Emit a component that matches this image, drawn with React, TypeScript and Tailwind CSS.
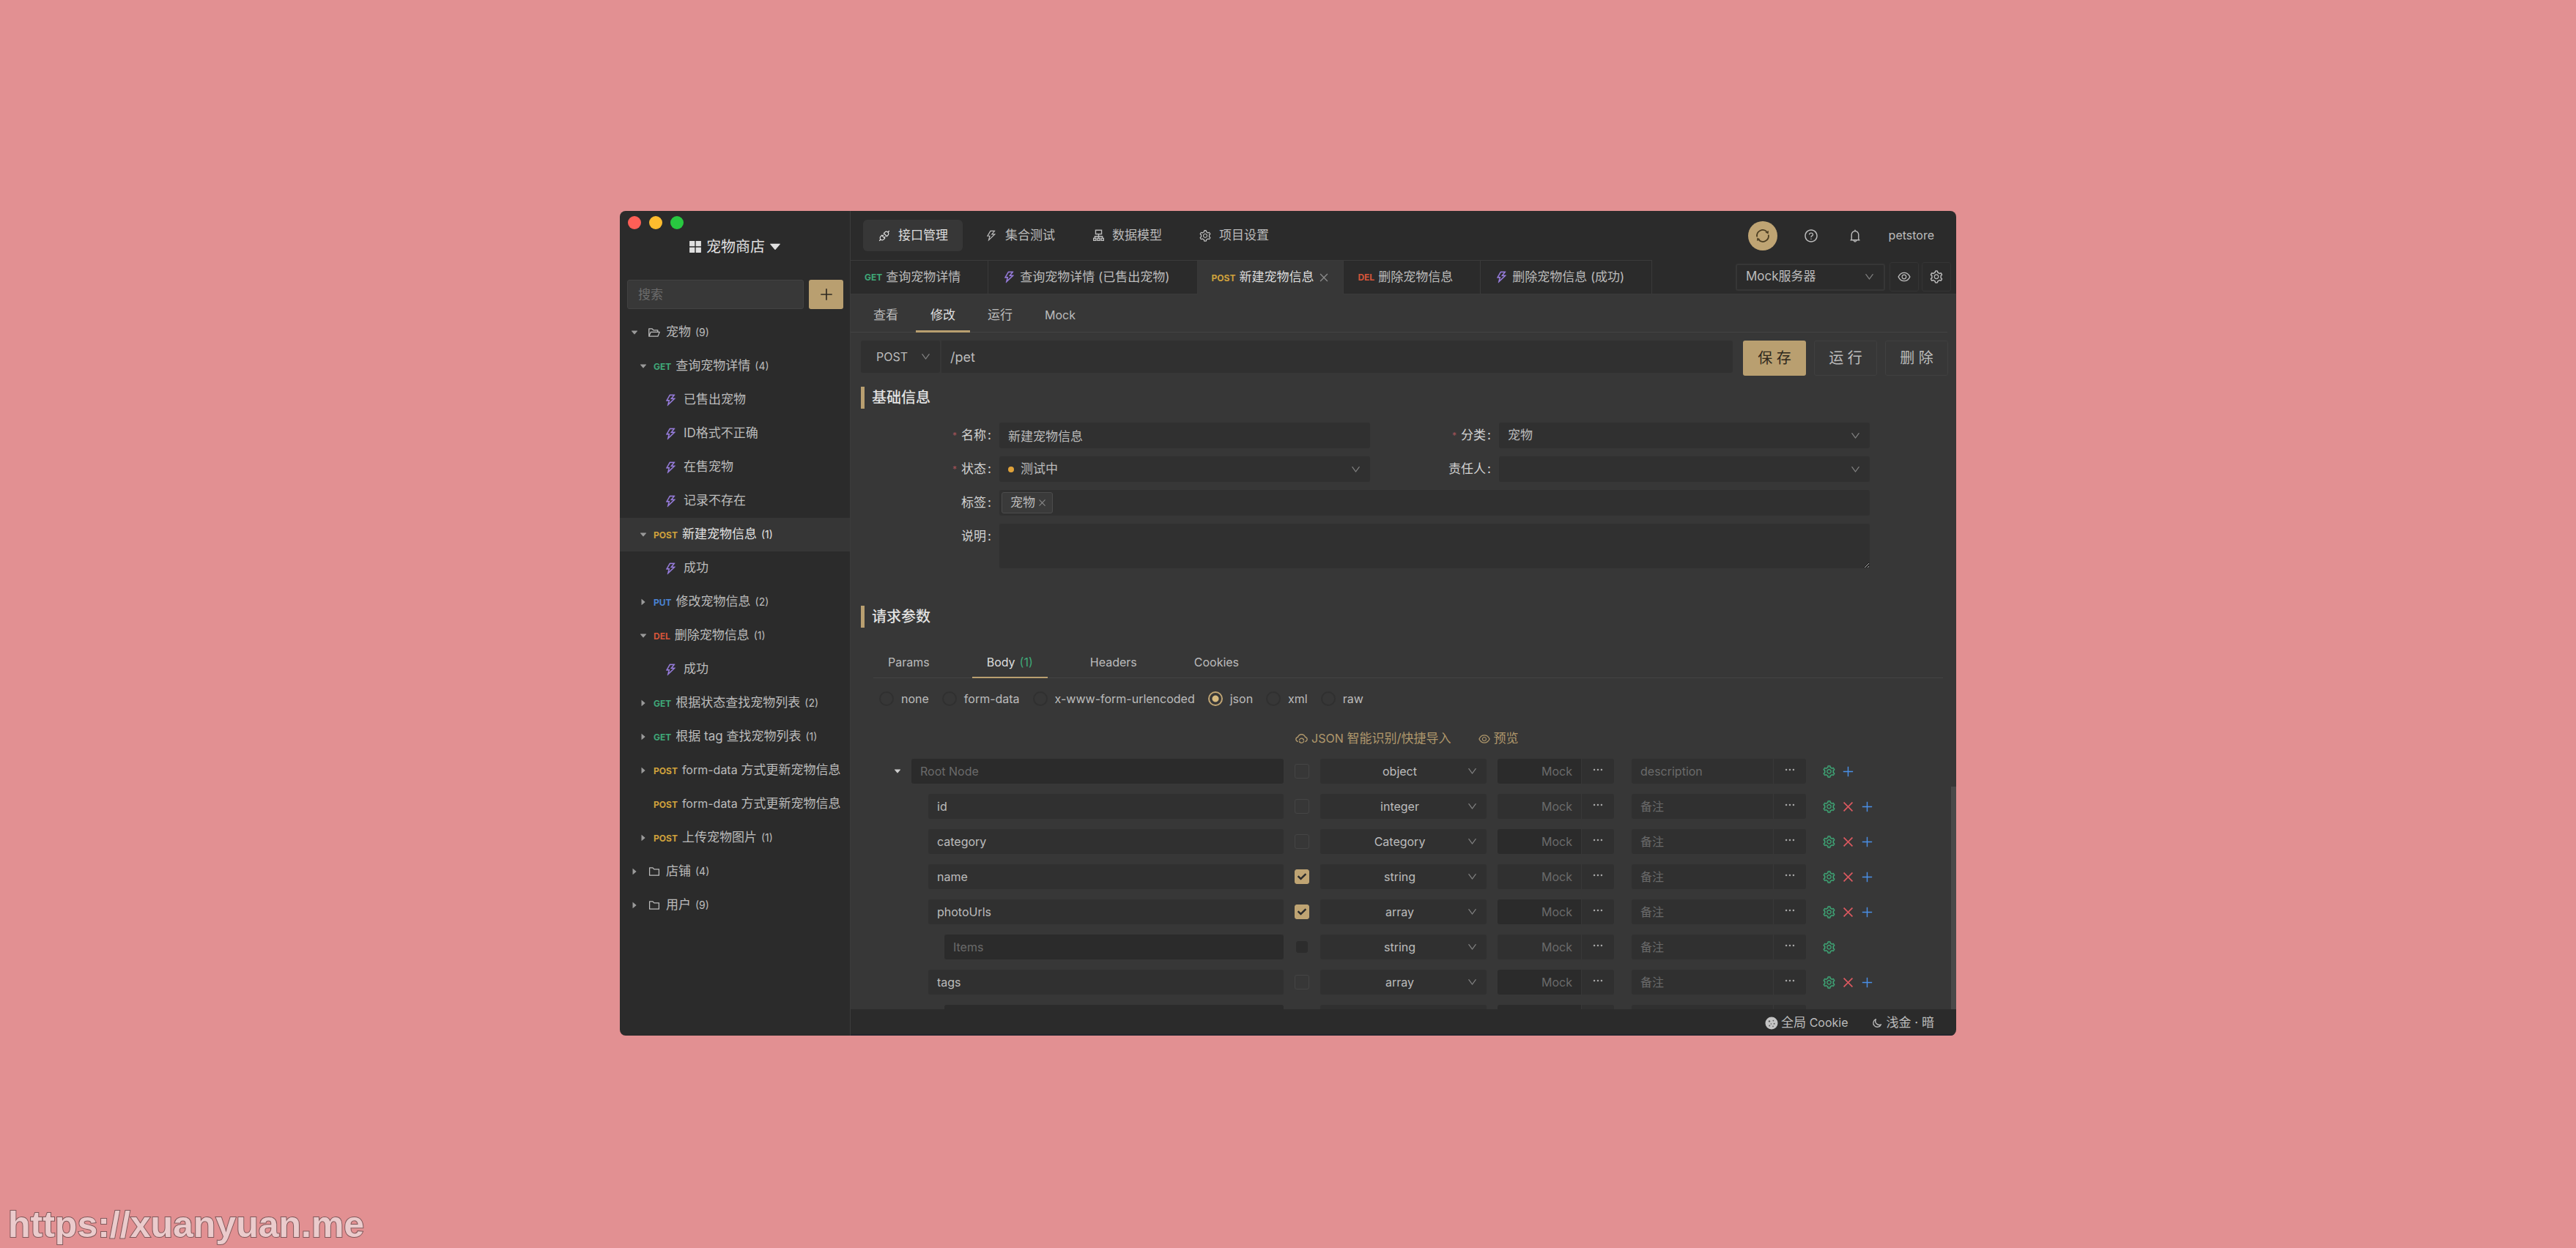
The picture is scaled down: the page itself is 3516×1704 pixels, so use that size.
import React from "react";
import {
  AiOutlineApi,
  AiOutlineThunderbolt,
  AiOutlineSetting,
  AiOutlineFolder,
  AiOutlineFolderOpen,
  AiOutlineQuestionCircle,
  AiOutlineBell,
  AiOutlineEye,
  AiOutlineClose,
  AiOutlinePlus,
  AiOutlineDown,
  AiOutlineCloudSync,
  AiFillCaretDown,
  AiFillCaretRight,
  AiFillAppstore,
  AiOutlineEllipsis,
} from "react-icons/ai";
import { FaCheck } from "react-icons/fa";

type Method = "GET" | "POST" | "PUT" | "DEL";

const methodColor: Record<Method, string> = {
  GET: "text-[#3fa878]",
  POST: "text-[#d0a23c]",
  PUT: "text-[#4a83d4]",
  DEL: "text-[#d4553a]",
};

function MethodBadge({ method }: { method: Method }) {
  return (
    <span className={`shrink-0 pt-0.5 text-[12px] font-bold ${methodColor[method]}`}>{method}</span>
  );
}

function SyncIcon() {
  return (
    <svg viewBox="0 0 24 24" className="size-[22px]" fill="none" stroke="currentColor" strokeWidth="2">
      <path d="M3.5 13.5A8.6 8.6 0 0 1 18 5.8" />
      <path d="M20.5 10.5A8.6 8.6 0 0 1 6 18.2" />
      <path d="M20.8 4.4l-.6 5-4.4-2.6z" fill="currentColor" stroke="none" />
      <path d="M3.2 19.6l.6-5 4.4 2.6z" fill="currentColor" stroke="none" />
    </svg>
  );
}

function ModelIcon() {
  return (
    <svg viewBox="0 0 16 16" className="size-[17px]" fill="none" stroke="currentColor" strokeWidth="1.3">
      <rect x="4.2" y="1.2" width="7.6" height="5" />
      <path d="M8 6.2v3M3.2 12V9.2h9.6V12M8 9.2V12" />
      <rect x="1.6" y="11.6" width="3" height="2.8" />
      <rect x="6.5" y="11.6" width="3" height="2.8" />
      <rect x="11.4" y="11.6" width="3" height="2.8" />
    </svg>
  );
}

function CookieIcon() {
  return (
    <svg viewBox="0 0 18 18" className="size-[18px]">
      <circle cx="9" cy="9" r="8.5" fill="#c4c4c4" />
      <g fill="#5a5a5a">
        <circle cx="6" cy="6.4" r="1.2" />
        <circle cx="11.4" cy="5.6" r="0.9" />
        <circle cx="12.6" cy="9.8" r="1" />
        <circle cx="8.4" cy="10" r="0.8" />
        <circle cx="6.2" cy="12.6" r="1" />
        <circle cx="11" cy="13.4" r="0.8" />
      </g>
    </svg>
  );
}

function MoonIcon() {
  return (
    <svg viewBox="0 0 16 16" className="size-[14px]" fill="none" stroke="currentColor" strokeWidth="1.5">
      <path d="M6.2 1.8A6.3 6.3 0 1 0 14.3 10 6 6 0 0 1 6.2 1.8z" strokeLinejoin="round" />
    </svg>
  );
}

type TreeItem = {
  kind: "folder" | "api" | "case";
  label: React.ReactNode;
  count?: number;
  method?: Method;
  open?: boolean;
  leaf?: boolean;
  selected?: boolean;
};

const tree: TreeItem[] = [
  { kind: "folder", label: "宠物", count: 9, open: true },
  { kind: "api", method: "GET", label: "查询宠物详情", count: 4, open: true },
  { kind: "case", label: "已售出宠物" },
  { kind: "case", label: "ID格式不正确" },
  { kind: "case", label: "在售宠物" },
  { kind: "case", label: "记录不存在" },
  { kind: "api", method: "POST", label: "新建宠物信息", count: 1, open: true, selected: true },
  { kind: "case", label: "成功" },
  { kind: "api", method: "PUT", label: "修改宠物信息", count: 2 },
  { kind: "api", method: "DEL", label: "删除宠物信息", count: 1, open: true },
  { kind: "case", label: "成功" },
  { kind: "api", method: "GET", label: "根据状态查找宠物列表", count: 2 },
  { kind: "api", method: "GET", label: "根据 tag 查找宠物列表", count: 1 },
  { kind: "api", method: "POST", label: <><span className="text-[16px]">form-data</span> 方式更新宠物信息</> },
  { kind: "api", method: "POST", label: <><span className="text-[16px]">form-data</span> 方式更新宠物信息</>, leaf: true },
  { kind: "api", method: "POST", label: "上传宠物图片", count: 1 },
  { kind: "folder", label: "店铺", count: 4 },
  { kind: "folder", label: "用户", count: 9 },
];

function TreeRow({ item }: { item: TreeItem }) {
  const indent = item.kind === "folder" ? "pl-[14px]" : item.kind === "api" ? "pl-[26px]" : "pl-[60px]";
  return (
    <li>
      <button
        type="button"
        className={`flex h-[46px] w-full items-center overflow-hidden whitespace-nowrap text-left ${indent} ${
          item.selected ? "bg-[#363636] text-[#e4e4e4]" : ""
        }`}
      >
        {item.kind !== "case" && (
          <span className="flex w-3 shrink-0 text-[12px] text-[#9a9a9a]">
            {!item.leaf && (item.open ? <AiFillCaretDown /> : <AiFillCaretRight />)}
          </span>
        )}
        {item.kind === "folder" && (
          <span className="ml-3 mr-[7px] shrink-0 text-[18px]">
            {item.open ? <AiOutlineFolderOpen /> : <AiOutlineFolder />}
          </span>
        )}
        {item.method && (
          <span className="ml-2 mr-1.5 flex">
            <MethodBadge method={item.method} />
          </span>
        )}
        {item.kind === "case" && (
          <AiOutlineThunderbolt className="mr-2 size-[19px] shrink-0 stroke-[16] text-[#9a7fe0]" />
        )}
        <span>{item.label}</span>
        {item.count !== undefined && <span className="ml-1.5 text-[14px]">({item.count})</span>}
      </button>
    </li>
  );
}

function Sidebar() {
  return (
    <aside className="flex w-[315px] shrink-0 flex-col border-r border-[#3c3c3c]">
      <div className="flex gap-[11px] px-[11px] pt-[7px]">
        <span className="size-[18px] rounded-full bg-[#ff5f57]" />
        <span className="size-[18px] rounded-full bg-[#febc2e]" />
        <span className="size-[18px] rounded-full bg-[#28c840]" />
      </div>
      <button
        type="button"
        className="mt-2 flex h-8 items-center justify-center text-[20px] text-[#e0e0e0]"
      >
        <AiFillAppstore className="mr-1 size-[22px]" />
        宠物商店
        <AiFillCaretDown className="ml-1 size-5" />
      </button>
      <div className="mt-[29px] flex gap-[7px] pl-[10px] pr-[9px]">
        <input
          aria-label="搜索"
          placeholder="搜索"
          className="h-10 min-w-0 flex-1 rounded-[3px] border border-[#424242] bg-[#383838] px-[14px] placeholder:text-[#6c6c6c]"
        />
        <button
          type="button"
          aria-label="新增"
          className="flex h-10 w-[47px] items-center justify-center rounded-[3px] bg-[#b99f70] text-[22px] text-[#2e2820]"
        >
          <AiOutlinePlus />
        </button>
      </div>
      <ul className="mt-[9px] min-h-0 flex-1 overflow-hidden">
        {tree.map((item, i) => (
          <TreeRow key={i} item={item} />
        ))}
      </ul>
    </aside>
  );
}

function TopBar() {
  const nav = [
    { icon: <AiOutlineApi />, label: "接口管理", active: true },
    { icon: <AiOutlineThunderbolt />, label: "集合测试" },
    { icon: <ModelIcon />, label: "数据模型" },
    { icon: <AiOutlineSetting />, label: "项目设置" },
  ];
  return (
    <header className="flex h-[67px] shrink-0 items-center pl-[17px] pr-[30px]">
      <nav className="flex gap-[10px]">
        {nav.map((n) => (
          <button
            key={n.label}
            type="button"
            className={`flex h-[43px] items-center gap-2.5 rounded-md px-5 ${
              n.active ? "bg-[#373737] text-[#dedede]" : ""
            }`}
          >
            <span className="flex w-[18px] justify-center text-[18px]">{n.icon}</span>
            {n.label}
          </button>
        ))}
      </nav>
      <div className="ml-auto flex items-center">
        <button
          type="button"
          aria-label="同步"
          className="flex size-10 items-center justify-center rounded-full bg-[#bfa473] text-[#4b3d22]"
        >
          <SyncIcon />
        </button>
        <button type="button" aria-label="帮助" className="ml-9 text-[20px]">
          <AiOutlineQuestionCircle />
        </button>
        <button type="button" aria-label="通知" className="ml-10 text-[20px]">
          <AiOutlineBell />
        </button>
        <button type="button" className="ml-9 text-[16px]">
          petstore
        </button>
      </div>
    </header>
  );
}

function FieldSelect({
  label,
  id,
  value,
  className = "",
  arrow = "right-3",
}: {
  label?: string;
  id?: string;
  value: string;
  className?: string;
  arrow?: string;
}) {
  return (
    <span className="relative block">
      <select
        id={id}
        aria-label={label}
        defaultValue={value}
        className={`w-full appearance-none rounded-[3px] ${className}`}
      >
        <option value={value}>{value}</option>
      </select>
      <AiOutlineDown
        className={`pointer-events-none absolute top-1/2 size-[15px] -translate-y-1/2 text-[#808080] ${arrow}`}
      />
    </span>
  );
}

function FileTabs() {
  const tabs: { method?: Method; label: string; active?: boolean }[] = [
    { method: "GET", label: "查询宠物详情" },
    { label: "查询宠物详情 (已售出宠物)" },
    { method: "POST", label: "新建宠物信息", active: true },
    { method: "DEL", label: "删除宠物信息" },
    { label: "删除宠物信息 (成功)" },
  ];
  return (
    <div className="flex h-[47px] shrink-0 border-b border-[#3a3a3a]">
      <div className="flex" role="tablist" aria-label="已打开的接口">
        {tabs.map((t) => (
          <button
            key={t.label}
            type="button"
            role="tab"
            aria-selected={!!t.active}
            className={`-mb-px flex items-center whitespace-nowrap border-r border-t border-[#3a3a3a] pl-[19px] ${
              t.active ? "bg-[#373737] pr-[18px] text-[#dedede]" : "border-b pr-[37px]"
            }`}
          >
            {t.method ? (
              <span className="mr-[5px] flex">
                <MethodBadge method={t.method} />
              </span>
            ) : (
              <AiOutlineThunderbolt className="mr-[5px] size-[19px] stroke-[16] text-[#9a7fe0]" />
            )}
            {t.label}
            {t.active && <AiOutlineClose className="ml-1.5 size-4 text-[#8c8c8c]" />}
          </button>
        ))}
      </div>
      <div className="ml-auto flex items-center gap-1 pr-[7px]">
        <div className="w-[206px] pr-0.5">
          <FieldSelect
            label="运行环境"
            value="Mock服务器"
            className="h-[37px] border-2 border-[#363636] pl-3"
            arrow="right-[14px]"
          />
        </div>
        <button
          type="button"
          aria-label="查看环境"
          className="flex size-10 items-center justify-center rounded-[3px] border border-[#343434] text-[20px]"
        >
          <AiOutlineEye />
        </button>
        <button
          type="button"
          aria-label="环境设置"
          className="flex size-10 items-center justify-center rounded-[3px] border border-[#343434] text-[20px]"
        >
          <AiOutlineSetting />
        </button>
      </div>
    </div>
  );
}

function SectionTitle({ children }: { children: React.ReactNode }) {
  return (
    <h2 className="flex h-[30px] items-center border-l-[5px] border-[#b99f70] pl-[10px] text-[20px] font-medium text-[#e2e2e2]">
      {children}
    </h2>
  );
}

function FieldLabel({ htmlFor, required, children }: { htmlFor: string; required?: boolean; children: string }) {
  return (
    <label htmlFor={htmlFor} className="flex h-[35px] items-center justify-end pr-[11px] text-[#d2d2d2]">
      {required && <span className="mr-1.5 text-[12px] leading-none text-[#a05257]">*</span>}
      {children}
      <span className="ml-0.5">:</span>
    </label>
  );
}

function BasicForm() {
  return (
    <form className="mr-[118px] mt-[19px] grid grid-cols-[173px_1fr_176px_1fr] gap-y-[11px] pl-[16px]">
      <FieldLabel htmlFor="f-name" required>
        名称
      </FieldLabel>
      <input id="f-name" defaultValue="新建宠物信息" className="h-[35px] min-w-0 rounded-[3px] bg-[#303030] px-3" />
      <FieldLabel htmlFor="f-category" required>
        分类
      </FieldLabel>
      <FieldSelect id="f-category" value="宠物" className="h-[35px] bg-[#303030] px-3" />

      <FieldLabel htmlFor="f-status" required>
        状态
      </FieldLabel>
      <div className="relative">
        <span className="pointer-events-none absolute left-3 top-1/2 z-10 size-2 -translate-y-1/2 rounded-full bg-[#e0a23a]" />
        <FieldSelect id="f-status" value="测试中" className="h-[35px] bg-[#303030] pl-[29px]" />
      </div>
      <FieldLabel htmlFor="f-owner">责任人</FieldLabel>
      <FieldSelect id="f-owner" value="" className="h-[35px] bg-[#303030] px-3" />

      <FieldLabel htmlFor="f-tags">标签</FieldLabel>
      <div className="col-span-3 flex h-[35px] items-center rounded-[3px] bg-[#303030] px-[3px]">
        <span className="flex h-[29px] items-center rounded-[3px] border border-[#4c4c4c] bg-[#3a3a3a] pl-[11px] pr-[7px]">
          宠物
          <button type="button" aria-label="移除标签 宠物" className="ml-[3px] text-[#8c8c8c]">
            <AiOutlineClose className="size-[13px]" />
          </button>
        </span>
        <input id="f-tags" className="h-full min-w-0 flex-1 bg-transparent px-2 outline-none" />
      </div>

      <FieldLabel htmlFor="f-desc">说明</FieldLabel>
      <textarea id="f-desc" className="col-span-3 h-[61px] resize-y rounded-[3px] bg-[#303030] px-3 scheme-dark" />
    </form>
  );
}

type Row = {
  name?: string;
  placeholder?: string;
  depth: 0 | 1 | 2;
  type: string;
  checked?: boolean;
  fixed?: boolean;
  mockOff?: boolean;
  actions: ("gear" | "close" | "plus")[];
};

const rows: Row[] = [
  { placeholder: "Root Node", depth: 0, type: "object", mockOff: true, actions: ["gear", "plus"] },
  { name: "id", depth: 1, type: "integer", actions: ["gear", "close", "plus"] },
  { name: "category", depth: 1, type: "Category", mockOff: true, actions: ["gear", "close", "plus"] },
  { name: "name", depth: 1, type: "string", checked: true, actions: ["gear", "close", "plus"] },
  { name: "photoUrls", depth: 1, type: "array", checked: true, mockOff: true, actions: ["gear", "close", "plus"] },
  { placeholder: "Items", depth: 2, type: "string", fixed: true, actions: ["gear"] },
  { name: "tags", depth: 1, type: "array", mockOff: true, actions: ["gear", "close", "plus"] },
  { placeholder: "Items", depth: 2, type: "Tag", fixed: true, mockOff: true, actions: ["gear"] },
];

function MoreButton({ label }: { label: string }) {
  return (
    <button
      type="button"
      aria-label={label}
      className="flex h-[34px] w-[45px] shrink-0 items-center justify-center rounded-r-[3px] border-l border-[#383838] bg-[#303030] pb-1 text-[18px]"
    >
      <AiOutlineEllipsis className="stroke-[24]" />
    </button>
  );
}

function SchemaRow({ row }: { row: Row }) {
  const pad = row.depth === 0 ? "pl-[27px]" : row.depth === 1 ? "pl-[75px]" : "pl-[97px]";
  const key = row.name ?? row.placeholder ?? "";
  return (
    <tr className="h-12">
      <td className={pad}>
        <div className="flex items-center">
          {row.depth === 0 && (
            <button type="button" aria-label="折叠" className="w-[25px] text-[12px] text-[#cccccc]">
              <AiFillCaretDown />
            </button>
          )}
          <input
            aria-label={`${key} 字段名`}
            defaultValue={row.name}
            placeholder={row.placeholder}
            disabled={!row.name}
            className="h-[34px] min-w-0 flex-1 rounded-[3px] bg-[#303030] px-3 placeholder:text-[#6a6a6a] disabled:bg-[#2b2b2b]"
          />
        </div>
      </td>
      <td>
        <span className="relative mx-auto flex size-5 items-center justify-center">
          <input
            type="checkbox"
            aria-label={`${key} 必需`}
            defaultChecked={row.checked}
            disabled={row.fixed}
            className="size-5 appearance-none rounded-[3px] border border-[#454545] checked:border-[#bfa473] checked:bg-[#bfa473] disabled:size-4 disabled:border-[#2c2c2c] disabled:bg-[#2c2c2c]"
          />
          {row.checked && <FaCheck className="pointer-events-none absolute size-3 text-[#2b2b2b]" />}
        </span>
      </td>
      <td>
        <div className="w-[227px]">
          <FieldSelect
            label={`${key} 类型`}
            value={row.type}
            className="h-[34px] bg-[#303030] pl-[10px] pr-5 text-center [text-align-last:center]"
          />
        </div>
      </td>
      <td>
        <div className="flex">
          <input
            aria-label={`${key} Mock`}
            placeholder="Mock"
            disabled={row.mockOff}
            className="h-[34px] w-[114px] rounded-l-[3px] bg-[#303030] px-3 text-right placeholder:text-[#6a6a6a] disabled:bg-[#2b2b2b]"
          />
          <MoreButton label={`${key} Mock 选项`} />
        </div>
      </td>
      <td>
        <div className="flex">
          <input
            aria-label={`${key} 说明`}
            placeholder={row.depth === 0 ? "description" : "备注"}
            className="h-[34px] w-[193px] rounded-l-[3px] bg-[#303030] px-3 placeholder:text-[#6a6a6a]"
          />
          <MoreButton label={`${key} 说明编辑`} />
        </div>
      </td>
      <td>
        <div className="flex gap-[7px] text-[19px]">
          {row.actions.map((a) =>
            a === "gear" ? (
              <button key={a} type="button" aria-label={`${key} 高级设置`} className="text-[#3fa878]">
                <AiOutlineSetting className="stroke-[12]" />
              </button>
            ) : a === "close" ? (
              <button key={a} type="button" aria-label={`${key} 删除`} className="text-[#dc5960]">
                <AiOutlineClose className="stroke-[12]" />
              </button>
            ) : (
              <button key={a} type="button" aria-label={`${key} 新增`} className="text-[#4a90e8]">
                <AiOutlinePlus />
              </button>
            ),
          )}
        </div>
      </td>
    </tr>
  );
}

function RequestParams() {
  const bodyTypes = ["none", "form-data", "x-www-form-urlencoded", "json", "xml", "raw"];
  return (
    <div className="pl-[17px] text-[16px]">
      <div
        role="tablist"
        aria-label="请求参数"
        className="mr-[18px] mt-[26px] flex h-[43px] gap-[38px] border-b border-[#434343]"
      >
        {["Params", "Body", "Headers", "Cookies"].map((t) => (
          <button
            key={t}
            type="button"
            role="tab"
            aria-selected={t === "Body"}
            className={`-mb-px flex items-center border-b-2 px-5 pt-0.5 ${
              t === "Body" ? "border-[#b99f70] text-[#dedede]" : "border-transparent"
            }`}
          >
            {t}
            {t === "Body" && <span className="ml-1.5 text-[#3fa878]">(1)</span>}
          </button>
        ))}
      </div>
      <fieldset className="mt-[13px] flex h-[30px] items-center gap-[18px] pl-2" aria-label="Body 类型">
        {bodyTypes.map((b) => (
          <label key={b} className="flex items-center gap-[10px]">
            <input
              type="radio"
              name="body-type"
              defaultChecked={b === "json"}
              className="size-5 appearance-none rounded-full border-2 border-[#303030] checked:border-[#bfa473] checked:bg-[radial-gradient(circle,#d6b97f_0_4px,transparent_5px)]"
            />
            {b}
          </label>
        ))}
      </fieldset>
      <div className="mt-[25px] flex h-[30px] items-center pl-[575px] text-[17px] text-[#b0986c]">
        <a href="#import" className="flex items-center gap-1">
          <AiOutlineCloudSync className="size-[19px]" />
          <span>
            <span className="text-[16px]">JSON</span> 智能识别/快捷导入
          </span>
        </a>
        <a href="#preview" className="ml-9 flex items-center gap-1">
          <AiOutlineEye className="size-[18px]" />
          预览
        </a>
      </div>
      <table className="mt-[5px] w-full table-fixed border-collapse">
        <colgroup>
          <col />
          <col className="w-[50px]" />
          <col className="w-[242px]" />
          <col className="w-[183px]" />
          <col className="w-[260px]" />
          <col className="w-[183px]" />
        </colgroup>
        <tbody>
          {rows.map((row, i) => (
            <SchemaRow key={i} row={row} />
          ))}
        </tbody>
      </table>
    </div>
  );
}

function Editor() {
  return (
    <main className="relative flex min-h-0 flex-1 flex-col bg-[#373737]">
      <div
        role="tablist"
        aria-label="接口视图"
        className="mr-3 flex h-[52px] shrink-0 gap-1 border-b border-[#434343] pl-[11px]"
      >
        {["查看", "修改", "运行", "Mock"].map((t) => (
          <button
            key={t}
            type="button"
            role="tab"
            aria-selected={t === "修改"}
            className={`-mb-px flex items-center border-b-[3px] px-5 pt-2 ${
              t === "修改" ? "border-[#b99f70] text-[#dedede]" : "border-transparent"
            } ${t === "Mock" ? "text-[16px]" : ""}`}
          >
            {t}
          </button>
        ))}
      </div>
      <div className="min-h-0 flex-1 overflow-hidden pl-[14px]">
        <div className="mt-[11px] flex items-start gap-[14px] pr-[11px]">
          <div className="flex flex-1 gap-[2px]">
            <div className="w-[108px]">
              <FieldSelect label="请求方法" value="POST" className="h-11 bg-[#303030] pl-[21px] text-[16px]" />
            </div>
            <input
              aria-label="接口路径"
              defaultValue="/pet"
              className="h-11 min-w-0 flex-1 rounded-r-[3px] bg-[#303030] px-3 text-[18px]"
            />
          </div>
          <div className="flex gap-[11px] text-[20px]">
            <button type="button" className="h-12 w-[86px] rounded-[3px] bg-[#b99f70] text-[#30291d]">
              保 存
            </button>
            <button type="button" className="h-12 w-[86px] rounded-[3px] border border-[#404040]">
              运 行
            </button>
            <button type="button" className="h-12 w-[86px] rounded-[3px] border border-[#404040]">
              删 除
            </button>
          </div>
        </div>
        <div className="mt-[15px]">
          <SectionTitle>基础信息</SectionTitle>
        </div>
        <BasicForm />
        <div className="mt-[51px]">
          <SectionTitle>请求参数</SectionTitle>
        </div>
        <RequestParams />
      </div>
      <div className="absolute bottom-0 right-0 h-[304px] w-[7px] bg-[#494949]" />
    </main>
  );
}

export default function App() {
  return (
    <div className="relative flex h-screen min-h-[1200px] justify-center bg-[#e29092] pb-[290px] pt-[288px] font-['Inter','Noto_Sans_CJK_SC',sans-serif] text-[17px] leading-[1.4] text-[#bcbcbc]">
      <div className="flex w-full max-w-[1824px] overflow-hidden rounded-lg bg-[#2b2b2b]">
        <Sidebar />
        <div className="flex min-w-0 flex-1 flex-col">
          <TopBar />
          <FileTabs />
          <Editor />
          <footer className="flex h-9 shrink-0 items-center justify-end border-b-2 border-[#24262d] pr-[30px] pt-1">
            <button type="button" className="flex items-center gap-1">
              <CookieIcon />
              <span>
                全局 <span className="text-[16px]">Cookie</span>
              </span>
            </button>
            <button type="button" className="ml-8 flex items-center gap-1.5">
              <MoonIcon />
              浅金 · 暗
            </button>
          </footer>
        </div>
      </div>
      <a
        href="https://xuanyuan.me"
        className="absolute bottom-1 left-[11px] font-['Liberation_Sans',Arial,sans-serif] text-[50px] font-bold leading-[56px] text-[#ebcbcc] [-webkit-text-stroke:2px_#80585a] [paint-order:stroke]"
      >
        https://xuanyuan.me
      </a>
    </div>
  );
}
